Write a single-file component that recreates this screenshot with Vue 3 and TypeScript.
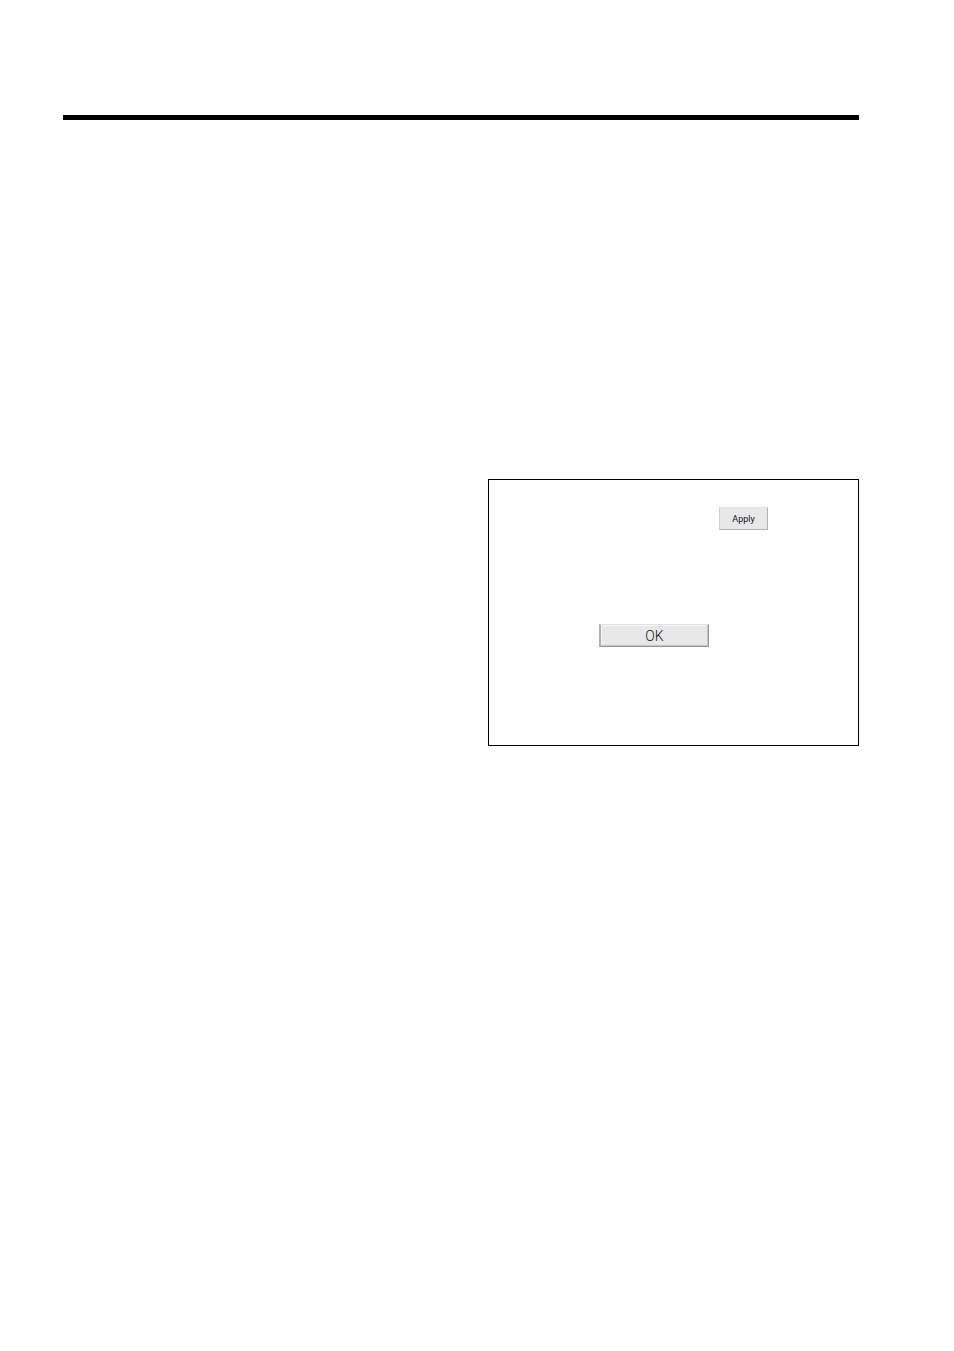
<script setup lang="ts">
function apply(): void {}
function confirm(): void {}
</script>

<template>
  <main class="page">
    <hr class="rule" />
    <div class="columns">
      <section class="panel">
        <div class="row row-apply">
          <button type="button" class="btn btn-apply" @click="apply">Apply</button>
        </div>
        <div class="row row-ok">
          <button type="button" class="btn btn-ok" @click="confirm">OK</button>
        </div>
      </section>
    </div>
  </main>
</template>

<style>
body {
  background: #fff;
}
</style>

<style scoped>
.page {
  padding: 115px 95px 115px 63px;
  font-family: Roboto, "Liberation Sans", sans-serif;
  color: #111;
}

.rule {
  height: 5px;
  margin: 0;
  border: 0;
  background: #000;
}

.columns {
  display: grid;
  grid-template-columns: 425fr 371fr;
  margin-top: 359px;
}

.panel {
  grid-column: 2;
  display: flex;
  flex-direction: column;
  gap: 94px;
  padding: 27px 90px 98px 110px;
  border: 1px solid #000;
}

.row {
  display: flex;
}

.row-apply {
  justify-content: flex-end;
}

.btn {
  box-sizing: border-box;
  height: 23px;
  padding: 0;
  border: 1px solid #b0b0b0;
  border-top-color: #e2e2e2;
  background: #e8e8e8;
  color: inherit;
  font-family: inherit;
  text-align: center;
}

.btn-apply {
  width: 49px;
  border-left-color: #d0d0d0;
  font-size: 9px;
  line-height: 20px;
}

.btn-ok {
  width: 110px;
  border-left: 2px solid #b0b0b0;
  border-right-color: #989898;
  border-bottom-color: #989898;
  box-shadow: inset -1px -1px #c4c4c4, inset 1px 1px #f6f6f6;
  font-size: 14px;
  font-weight: 300;
  line-height: 20px;
}
</style>
